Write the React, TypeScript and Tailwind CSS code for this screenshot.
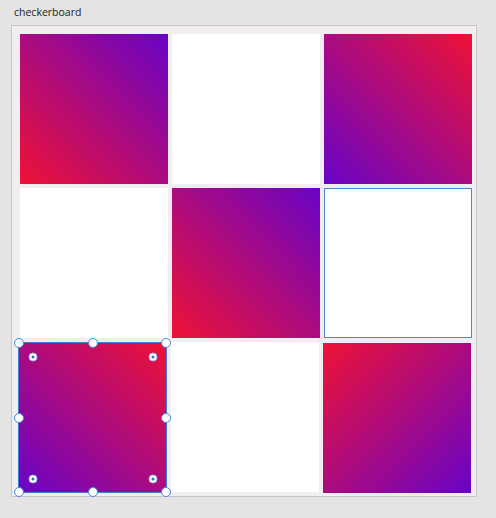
import React from 'react';

function Handle({ className }: { className: string }) {
  return (
    <span className={`absolute w-[10px] h-[10px] rounded-full bg-white border border-[#4a86d6] -translate-x-1/2 -translate-y-1/2 ${className}`} />
  );
}

function Pin({ className }: { className: string }) {
  return (
    <span className={`absolute w-[9px] h-[9px] rounded-full bg-white border border-[#9bbbe6] flex items-center justify-center -translate-x-1/2 -translate-y-1/2 ${className}`}>
      <span className="w-[3px] h-[3px] rounded-full bg-[#2f6fc8]" />
    </span>
  );
}

export default function App() {
  return (
    <div className="w-[496px] h-[518px] bg-[#e4e4e4] overflow-hidden" style={{ fontFamily: '"Open Sans", "Noto Sans", sans-serif' }}>
      <div className="pl-[14px] pt-[5px] h-[25px] text-[10.5px] text-[#222] leading-[15px]">checkerboard</div>
      <div className="ml-[11px] w-[466px] h-[472px] border border-[#c6c6c6] bg-[#f1edf1] pl-[8px] pt-[8px] flex flex-col gap-1">
        {/* row 1 */}
        <div className="flex gap-1">
          <div className="w-[148px] h-[150px] bg-[linear-gradient(to_top_right,#ee1236,#6804c6)]" />
          <div className="w-[148px] h-[150px] bg-white" />
          <div className="w-[148px] h-[150px] bg-[linear-gradient(to_bottom_left,#ee1236,#6804c6)]" />
        </div>
        {/* row 2 */}
        <div className="flex gap-1">
          <div className="w-[148px] h-[150px] bg-white" />
          <div className="w-[148px] h-[150px] bg-[linear-gradient(to_top_right,#ee1236,#6804c6)]" />
          <div className="w-[148px] h-[150px] bg-white border border-[#4a86d6]" />
        </div>
        {/* row 3 */}
        <div className="flex gap-1 -ml-[2px]">
          <div className="relative w-[149px] h-[151px] border border-[#3f7ed4] bg-[linear-gradient(to_bottom_left,#ee1236,#6804c6)]">
            <Handle className="left-0 top-0" />
            <Handle className="left-1/2 top-0" />
            <Handle className="left-full top-0" />
            <Handle className="left-0 top-1/2" />
            <Handle className="left-full top-1/2" />
            <Handle className="left-0 top-full" />
            <Handle className="left-1/2 top-full" />
            <Handle className="left-full top-full" />
            <Pin className="left-[14px] top-[14px]" />
            <Pin className="left-[134px] top-[14px]" />
            <Pin className="left-[14px] top-[136px]" />
            <Pin className="left-[134px] top-[136px]" />
          </div>
          <div className="w-[148px] h-[150px] bg-white" />
          <div className="w-[148px] h-[150px] mt-px bg-[linear-gradient(to_bottom_right,#ee1236,#6804c6)]" />
        </div>
      </div>
    </div>
  );
}
